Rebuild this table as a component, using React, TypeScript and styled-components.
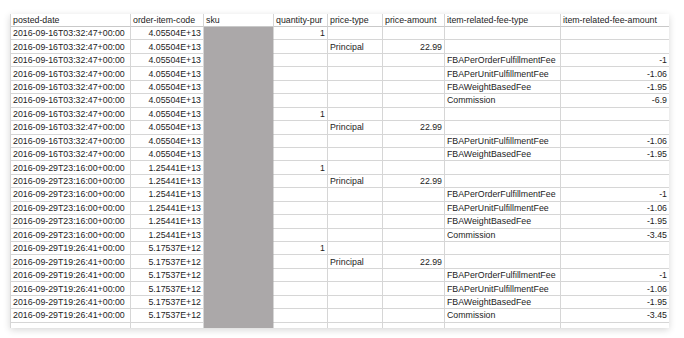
import React from 'react';
import styled, { createGlobalStyle } from 'styled-components';

const GlobalStyle = createGlobalStyle`
  html, body {
    margin: 0;
    padding: 0;
    background: #ffffff;
  }
`;

const Page = styled.div`
  width: 684px;
  height: 338px;
  padding: 14px 0 0 10px;
  box-sizing: border-box;
  background: #ffffff;
`;

const Sheet = styled.div`
  width: 659px;
  height: 314px;
  overflow: hidden;
  background: #ffffff;
  box-shadow: 0 2px 7px rgba(0, 0, 0, 0.16);
  display: grid;
  grid-template-columns: 120px 73px 70px 54px 55px 62px 116px 109px;
  grid-auto-rows: 13.45px;
  grid-template-rows: 13px;
  border-left: 1px solid #d6d6d6;
  box-sizing: border-box;
  font-family: 'Liberation Sans', Arial, sans-serif;
  font-size: 8.8px;
  color: #1c1c1c;
`;

const Cell = styled.div<{ $align?: 'left' | 'right'; $masked?: boolean }>`
  display: flex;
  align-items: center;
  justify-content: ${p => (p.$align === 'right' ? 'flex-end' : 'flex-start')};
  padding: 0 2px;
  white-space: nowrap;
  overflow: hidden;
  box-sizing: border-box;
  border-right: 1px solid #d6d6d6;
  border-bottom: 1px solid ${p => (p.$masked ? '#aba8a9' : '#d6d6d6')};
  background: ${p => (p.$masked ? '#aba8a9' : '#ffffff')};
`;

const HeaderCell = styled(Cell)`
  border-bottom-color: #c9c9c9;
`;

const headers = [
  'posted-date',
  'order-item-code',
  'sku',
  'quantity-pur',
  'price-type',
  'price-amount',
  'item-related-fee-type',
  'item-related-fee-amount',
];

type Row = [string, string, string, string, string, string, string];

const d1 = '2016-09-16T03:32:47+00:00';
const d2 = '2016-09-29T23:16:00+00:00';
const d3 = '2016-09-29T19:26:41+00:00';
const c1 = '4.05504E+13';
const c2 = '1.25441E+13';
const c3 = '5.17537E+12';

const rows: Row[] = [
  [d1, c1, '1', '', '', '', ''],
  [d1, c1, '', 'Principal', '22.99', '', ''],
  [d1, c1, '', '', '', 'FBAPerOrderFulfillmentFee', '-1'],
  [d1, c1, '', '', '', 'FBAPerUnitFulfillmentFee', '-1.06'],
  [d1, c1, '', '', '', 'FBAWeightBasedFee', '-1.95'],
  [d1, c1, '', '', '', 'Commission', '-6.9'],
  [d1, c1, '1', '', '', '', ''],
  [d1, c1, '', 'Principal', '22.99', '', ''],
  [d1, c1, '', '', '', 'FBAPerUnitFulfillmentFee', '-1.06'],
  [d1, c1, '', '', '', 'FBAWeightBasedFee', '-1.95'],
  [d2, c2, '1', '', '', '', ''],
  [d2, c2, '', 'Principal', '22.99', '', ''],
  [d2, c2, '', '', '', 'FBAPerOrderFulfillmentFee', '-1'],
  [d2, c2, '', '', '', 'FBAPerUnitFulfillmentFee', '-1.06'],
  [d2, c2, '', '', '', 'FBAWeightBasedFee', '-1.95'],
  [d2, c2, '', '', '', 'Commission', '-3.45'],
  [d3, c3, '1', '', '', '', ''],
  [d3, c3, '', 'Principal', '22.99', '', ''],
  [d3, c3, '', '', '', 'FBAPerOrderFulfillmentFee', '-1'],
  [d3, c3, '', '', '', 'FBAPerUnitFulfillmentFee', '-1.06'],
  [d3, c3, '', '', '', 'FBAWeightBasedFee', '-1.95'],
  [d3, c3, '', '', '', 'Commission', '-3.45'],
  ['', '', '', '', '', '', ''],
];

const App: React.FC = () => {
  return (
    <Page>
      <GlobalStyle />
      <Sheet>
        {headers.map(h => (
          <HeaderCell key={h}>{h}</HeaderCell>
        ))}
        {rows.map((r, i) => (
          <React.Fragment key={i}>
            <Cell>{r[0]}</Cell>
            <Cell $align="right">{r[1]}</Cell>
            <Cell $masked />
            <Cell $align="right">{r[2]}</Cell>
            <Cell>{r[3]}</Cell>
            <Cell $align="right">{r[4]}</Cell>
            <Cell>{r[5]}</Cell>
            <Cell $align="right">{r[6]}</Cell>
          </React.Fragment>
        ))}
      </Sheet>
    </Page>
  );
};

export default App;
